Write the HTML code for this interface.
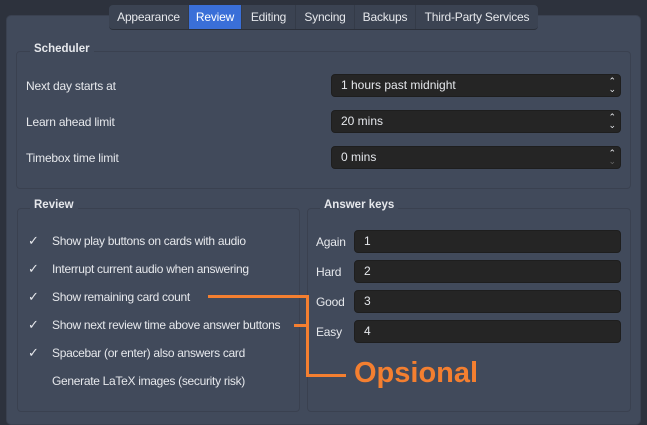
<!DOCTYPE html>
<html><head><meta charset="utf-8"><style>
*{box-sizing:border-box;margin:0;padding:0}
body{width:647px;height:418px;background:#2d323d;font-family:"Liberation Sans",sans-serif;font-size:12px;color:#e6e8ec;position:relative;overflow:hidden}
.abs{position:absolute;white-space:nowrap}
.panel{left:6px;top:15px;width:635px;height:410px;background:#414a5b;border-radius:5px;border:1px solid #3a4150}
.tabs{left:109px;top:5px;height:25px;width:429px;background:#3b4352;border-radius:4px;display:flex;border-bottom:1px solid #2b303a}
.tab{height:24px;line-height:24px;border-right:1px solid #343b48;font-size:12px;text-align:center;letter-spacing:-0.2px;white-space:nowrap}
.tab.act{background:#3a6fd8;color:#fff}
.grp{border:1px solid #3a4150;border-radius:4px}
.gt{font-weight:bold;font-size:11.5px;background:#414a5b;padding:0 4px}
.inp{background:#252525;border-radius:4px;border:1px solid #1e1e1e;height:23px;line-height:21px;padding-left:9px;font-size:12px}
.lbl{font-size:12px;letter-spacing:-0.2px}
.chk{left:28px;font-size:13px}
.item{left:52px;font-size:12px;letter-spacing:-0.3px}
.or{background:#f47f30}
.sp{position:absolute;right:4px;top:2px;font-size:9px;line-height:8px;text-align:center}
</style></head><body>
<div class="abs panel"></div>
<div class="abs tabs">
<div class="tab" style="width:80px">Appearance</div><div class="tab act" style="width:53px">Review</div><div class="tab" style="width:54px">Editing</div><div class="tab" style="width:59px">Syncing</div><div class="tab" style="width:61px">Backups</div><div class="tab" style="width:122px;border:none">Third-Party Services</div>
</div>
<div class="abs grp" style="left:16px;top:51px;width:615px;height:138px"></div>
<div class="abs gt" style="left:30px;top:43px">Scheduler</div>
<div class="abs lbl" style="left:26px;top:79px">Next day starts at</div>
<div class="abs lbl" style="left:26px;top:115px">Learn ahead limit</div>
<div class="abs lbl" style="left:26px;top:151px">Timebox time limit</div>
<div class="abs inp" style="left:331px;top:74px;width:290px">1 hours past midnight<div class="sp">&#8963;<br>&#8964;</div></div>
<div class="abs inp" style="left:331px;top:110px;width:290px">20 mins<div class="sp">&#8963;<br>&#8964;</div></div>
<div class="abs inp" style="left:331px;top:146px;width:290px">0 mins<div class="sp">&#8963;<br><span style="color:#666">&#8964;</span></div></div>

<div class="abs grp" style="left:17px;top:208px;width:283px;height:204px"></div>
<div class="abs gt" style="left:30px;top:199px">Review</div>
<div class="abs grp" style="left:307px;top:208px;width:324px;height:204px"></div>
<div class="abs gt" style="left:320px;top:199px">Answer keys</div>

<div class="abs chk" style="top:233px">✓</div><div class="abs item" style="top:234px">Show play buttons on cards with audio</div>
<div class="abs chk" style="top:261px">✓</div><div class="abs item" style="top:262px">Interrupt current audio when answering</div>
<div class="abs chk" style="top:289px">✓</div><div class="abs item" style="top:290px">Show remaining card count</div>
<div class="abs chk" style="top:317px">✓</div><div class="abs item" style="top:318px">Show next review time above answer buttons</div>
<div class="abs chk" style="top:345px">✓</div><div class="abs item" style="top:346px">Spacebar (or enter) also answers card</div>
<div class="abs item" style="top:374px">Generate LaTeX images (security risk)</div>

<div class="abs lbl" style="left:316px;top:235px">Again</div>
<div class="abs lbl" style="left:316px;top:265px">Hard</div>
<div class="abs lbl" style="left:316px;top:295px">Good</div>
<div class="abs lbl" style="left:316px;top:325px">Easy</div>
<div class="abs inp" style="left:354px;top:230px;width:267px">1</div>
<div class="abs inp" style="left:354px;top:260px;width:267px">2</div>
<div class="abs inp" style="left:354px;top:290px;width:267px">3</div>
<div class="abs inp" style="left:354px;top:320px;width:267px">4</div>

<div class="abs or" style="left:208px;top:295px;width:101px;height:3px"></div>
<div class="abs or" style="left:294px;top:324px;width:15px;height:3px"></div>
<div class="abs or" style="left:306px;top:295px;width:3px;height:82px"></div>
<div class="abs or" style="left:306px;top:374px;width:40px;height:3px"></div>
<div class="abs" style="left:354px;top:357px;font-size:29px;font-weight:bold;color:#f47f30">Opsional</div>
</body></html>
